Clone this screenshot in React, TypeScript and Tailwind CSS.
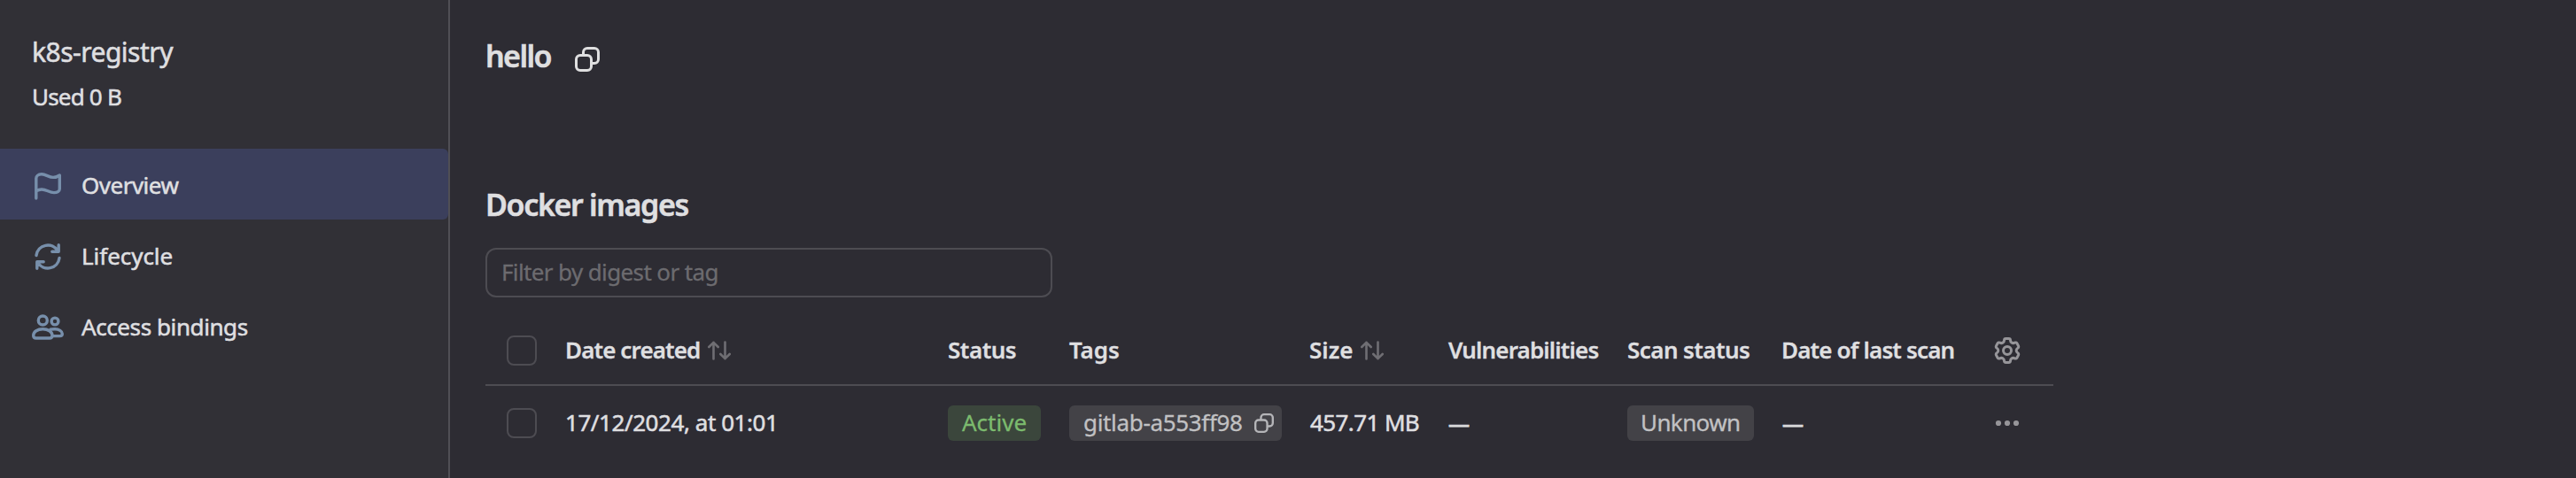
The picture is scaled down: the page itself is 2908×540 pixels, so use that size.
import type { ReactNode } from "react";

function CopyIcon({ className }: { className: string }) {
  return (
    <svg viewBox="0 0 28 28" className={className} fill="none" stroke="currentColor" strokeWidth="3">
      <rect x="1.5" y="9.5" width="17" height="17" rx="4.5" />
      <path d="M9.5 9.5V6A4.5 4.5 0 0 1 14 1.5H22A4.5 4.5 0 0 1 26.5 6V14A4.5 4.5 0 0 1 22 18.5H18.5" />
    </svg>
  );
}

function SortIcon({ className }: { className: string }) {
  return (
    <svg
      viewBox="0 0 26 22"
      className={`mt-[2px] h-[22px] w-[26px] text-[#6f6e73] ${className}`}
      fill="none"
      stroke="currentColor"
      strokeWidth="2.6"
      strokeLinecap="round"
      strokeLinejoin="round"
    >
      <path d="M6.5 20.5V1.8M1.3 7L6.5 1.8L11.7 7M19.5 1.5V20.2M14.3 15L19.5 20.2L24.7 15" />
    </svg>
  );
}

function NavIcon({ children }: { children: ReactNode }) {
  return (
    <svg
      viewBox="0 0 36 36"
      className="mt-[3px] h-9 w-9 shrink-0 text-[#778fab]"
      fill="none"
      stroke="currentColor"
      strokeWidth="3.4"
      strokeLinecap="round"
      strokeLinejoin="round"
    >
      {children}
    </svg>
  );
}

// Outline of a six-tooth gear centred in a 16-unit box.
const gearPath = (() => {
  const tooth = [
    [-1.75, -5.8],
    [-0.8, -6.75],
    [0.8, -6.75],
    [1.75, -5.8],
  ];
  let d = "";
  for (let i = 0; i < 6; i++) {
    const a = (i * Math.PI) / 3;
    const p = tooth.map(
      ([x, y]) =>
        `${(8 + x * Math.cos(a) - y * Math.sin(a)).toFixed(2)} ${(8 + x * Math.sin(a) + y * Math.cos(a)).toFixed(2)}`,
    );
    d += i === 0 ? `M${p[0]}` : `A1.6 1.6 0 0 0 ${p[0]}`;
    d += `A.95 .95 0 0 1 ${p[1]}L${p[2]}A.95 .95 0 0 1 ${p[3]}`;
  }
  return d + "A1.6 1.6 0 0 0 6.25 2.2Z";
})();

function GearIcon() {
  return (
    <svg
      viewBox="0 0 16 16"
      className="mt-[2px] h-8 w-8 text-[#969599]"
      fill="none"
      stroke="currentColor"
      strokeWidth="1.5"
    >
      <path d={gearPath} />
      <circle cx="8" cy="8" r="2.25" />
    </svg>
  );
}

function NavItem({ active, icon, children }: { active?: boolean; icon: ReactNode; children: ReactNode }) {
  return (
    <a
      className={`flex h-20 items-center rounded-r-[6px] pl-9 text-[26px] leading-9 ${active ? "bg-[#3b3f5c]" : ""}`}
    >
      <NavIcon>{icon}</NavIcon>
      <span className="ml-5 pt-[2px]">{children}</span>
    </a>
  );
}

function Checkbox({ className = "" }: { className?: string }) {
  return <span className={`ml-6 block h-[34px] w-[34px] rounded-[8px] border-2 border-[#4d4c52] ${className}`} />;
}

const row = "grid grid-cols-[90px_432px_137px_271px_157px_202px_174px_239px_68px] items-center whitespace-nowrap";

export default function App() {
  return (
    <div className="flex h-[540px] w-[2908px] overflow-hidden bg-[#2d2c33] font-['Noto_Sans','Liberation_Sans',sans-serif] text-[#dfdfe0] [-webkit-text-stroke:0.55px]">
      <aside className="h-full w-[508px] shrink-0 border-r-2 border-[#504f55] bg-[#313036]">
        <div className="h-[168px] pt-[39px] pl-9">
          <div className="text-[30px] leading-10 tracking-[-0.5px]">k8s-registry</div>
          <div className="mt-3 text-[26px] leading-9 tracking-[-0.8px]">Used 0 B</div>
        </div>
        <nav>
          <NavItem
            active
            icon={
              <path d="M4.8 32V9.5C4.8 7 7 4.8 11 4.8C16 4.8 19 8.4 24 8.4C27.5 8.4 29.5 7.3 31.3 6V21.5C31.3 24 28.5 25.6 25 25.6C19 25.6 17 22 11 22C8 22 6.5 22.8 4.8 23.8" />
            }
          >
            <span className="tracking-[-0.5px]">Overview</span>
          </NavItem>
          <NavItem
            icon={
              <path d="M5 16.5A13.1 13.1 0 0 1 29.3 11.5M30.2 4.8V12.3H22.8M31 19.5A13.1 13.1 0 0 1 6.7 24.5M5.8 31.2V23.7H13.2" />
            }
          >
            <span className="tracking-[-0.05px]">Lifecycle</span>
          </NavItem>
          <NavItem
            icon={
              <>
                <circle cx="12.3" cy="10" r="5" />
                <circle cx="26" cy="11" r="3.9" />
                <path d="M1.7 27C1.7 22.5 6.5 19.8 12.3 19.8S23 22.5 23 27C23 28.8 21.8 30 20 30H4.7C3 30 1.7 28.8 1.7 27Z" />
                <path d="M21 20.2C22.5 19.8 24 19.7 26 19.7C30.5 19.7 34.3 22.3 34.3 25C34.3 26.6 33 27.6 31.5 27.6H23.5" />
              </>
            }
          >
            <span className="tracking-[-0.41px]">Access bindings</span>
          </NavItem>
        </nav>
      </aside>

      <main className="flex-1 pl-10 text-[26px] leading-9">
        <header className="flex h-[209px] items-start pt-[41px]">
          <h1 className="w-[101px] text-[34px] leading-[44px] font-semibold tracking-[-1.6px]">hello</h1>
          <CopyIcon className="mt-3 h-7 w-7" />
        </header>
        <h2 className="text-[34px] leading-[44px] font-semibold tracking-[-1.35px]">Docker images</h2>
        <div className="mt-[27px] flex h-14 w-[640px] items-center rounded-[12px] border-2 border-[#4d4c52] pb-[2px] pl-4 tracking-[-0.62px] text-[#6c6b6f] [-webkit-text-stroke:0.3px]">
          Filter by digest or tag
        </div>

        <section className="mt-5 w-[1770px]">
          <div className={`${row} h-20 border-b-2 border-[#4d4c52] font-semibold [-webkit-text-stroke:0.3px]`}>
            <Checkbox className="mt-[2px]" />
            <div className="flex items-center tracking-[-0.88px]">
              Date created
              <SortIcon className="ml-2" />
            </div>
            <div className="tracking-[-0.48px]">Status</div>
            <div className="tracking-[-0.1px]">Tags</div>
            <div className="flex items-center">
              Size
              <SortIcon className="ml-[9px]" />
            </div>
            <div className="tracking-[-0.85px]">Vulnerabilities</div>
            <div className="tracking-[-0.56px]">Scan status</div>
            <div className="tracking-[-0.84px]">Date of last scan</div>
            <GearIcon />
          </div>
          <div className={`${row} h-[84px]`}>
            <Checkbox />
            <div className="pb-[2px] tracking-[-0.44px]">17/12/2024, at 01:01</div>
            <div>
              <span className="flex h-10 w-[105px] items-center rounded-[6px] bg-[#3b463c] pb-[2px] pl-4 text-[#7cbb6e] [-webkit-text-stroke:0.3px]">
                Active
              </span>
            </div>
            <div>
              <span className="flex h-10 w-60 items-center rounded-[6px] bg-[#434247] pl-4 text-[#c1c1c3] [-webkit-text-stroke:0.3px]">
                <span className="w-[193px] pb-[2px] tracking-[-0.33px]">gitlab-a553ff98</span>
                <CopyIcon className="h-[22px] w-[22px] text-[#b5b5b8]" />
              </span>
            </div>
            <div className="pb-[2px] pl-px tracking-[-0.6px]">457.71 MB</div>
            <div className="text-[24px] [-webkit-text-stroke:0.8px]">—</div>
            <div>
              <span className="flex h-10 w-[143px] items-center rounded-[6px] bg-[#434247] pb-[2px] pl-[15px] tracking-[-0.61px] text-[#c1c1c3] [-webkit-text-stroke:0.3px]">
                Unknown
              </span>
            </div>
            <div className="pl-px text-[24px] [-webkit-text-stroke:0.8px]">—</div>
            <svg viewBox="0 0 32 8" className="h-2 w-8 text-[#969599]" fill="currentColor">
              <circle cx="6" cy="4" r="3.1" />
              <circle cx="16" cy="4" r="3.1" />
              <circle cx="26" cy="4" r="3.1" />
            </svg>
          </div>
        </section>
      </main>
    </div>
  );
}
